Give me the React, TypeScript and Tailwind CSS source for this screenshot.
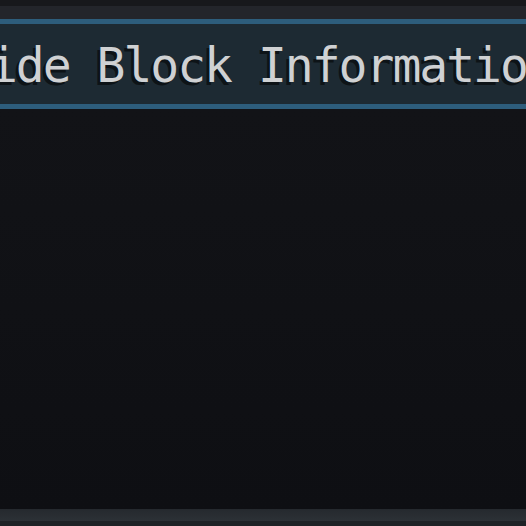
import React from "react";

export default function App() {
  return (
    <div className="w-[526px] h-[526px] overflow-hidden flex flex-col bg-[#101115]">
      {/* top bars */}
      <div className="h-[6px] bg-[#17181c]" />
      <div className="h-[13px] bg-[#23252b]" />

      {/* toggle button */}
      <div className="h-[90px] border-y-[5px] border-[#2d5d7c] bg-[#1d2a33] flex items-center overflow-hidden">
        <span
          className="ml-[-38px] whitespace-nowrap text-[48px] leading-none tracking-[-2px] text-[#cfd1d3] [text-shadow:-3px_3px_0_rgba(0,0,0,0.55)] mt-[2px]"
          style={{ fontFamily: "'DejaVu Sans Mono', 'Liberation Mono', monospace" }}
        >
          Hide Block Information
        </span>
      </div>

      {/* empty panel */}
      <div className="flex-1 bg-gradient-to-b from-[#121317] to-[#0e0f13]" />

      {/* bottom strip */}
      <div className="h-[12px] bg-gradient-to-b from-[#25292e] to-[#2c3136]" />
      <div className="h-[5px] bg-[#1e2226]" />
    </div>
  );
}
